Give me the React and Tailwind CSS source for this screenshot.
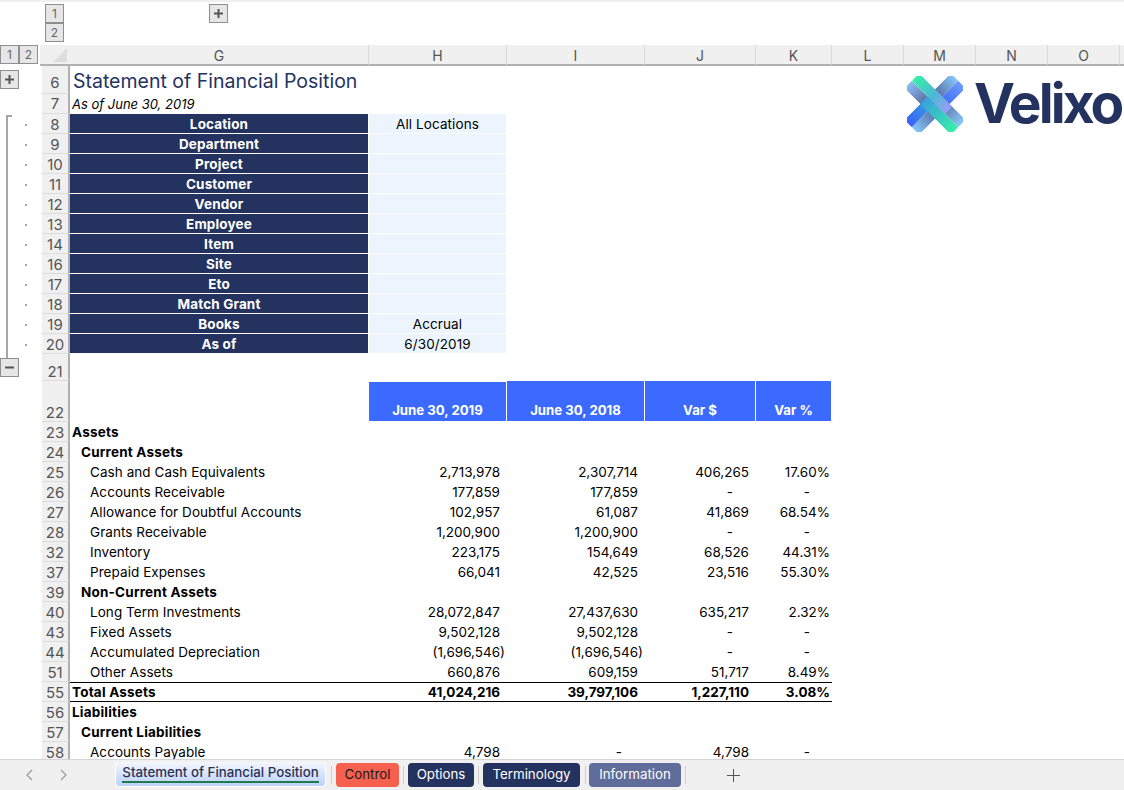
import React from "react";

const F = { fontFamily: '"Inter", "Liberation Sans", sans-serif' };

const cols = [
  ["G", 299],
  ["H", 138],
  ["I", 138],
  ["J", 111],
  ["K", 76],
  ["L", 72],
  ["M", 72],
  ["N", 72],
  ["O", 72],
];

function Grad({ id, dir, from, to, mid }) {
  const p = dir === "x" ? { x1: 0, y1: 0, x2: 1, y2: 0 } : { x1: 0, y1: 0, x2: 0, y2: 1 };
  return (
    <linearGradient id={id} {...p}>
      <stop offset="0" stopColor={from} />
      {mid && <stop offset="0.55" stopColor={mid} />}
      <stop offset="1" stopColor={to} />
    </linearGradient>
  );
}

function Logo() {
  return (
    <div className="absolute left-[907px] top-[76px] flex items-start">
      <svg width="56" height="56" viewBox="-28 -28 56 56" className="shrink-0">
        <defs>
          <clipPath id="xshape">
            <rect x="-33" y="-10.5" width="66" height="21" rx="4" />
            <rect x="-10.5" y="-33" width="21" height="66" rx="4" />
          </clipPath>
          <Grad id="greenBand" dir="x" from="#35f2a6" mid="#4cb8d4" to="#9a9cf8" />
          <Grad id="tlDark" dir="x" from="#8cbef7" to="#5f74a6" />
          <Grad id="brDark" dir="x" from="#5f7fb2" to="#8ccaf9" />
          <Grad id="brGreen" dir="x" from="#3a9fdc" to="#38f0a6" />
          <Grad id="trLight" dir="y" from="#85c8fa" to="#5f76ac" />
          <Grad id="trBlue" dir="y" from="#6f9bfb" to="#3560fb" />
          <Grad id="blBlue" dir="y" from="#3aa6da" to="#3a62fb" />
          <Grad id="blLight" dir="y" from="#5f7fb2" to="#86c6f9" />
        </defs>
        <g transform="rotate(45)" clipPath="url(#xshape)">
          <rect x="-33" y="0" width="23" height="10.5" fill="url(#tlDark)" />
          <rect x="10" y="-10.5" width="23" height="10.5" fill="url(#brDark)" />
          <rect x="-10.5" y="-33" width="10.5" height="23" fill="url(#trLight)" />
          <rect x="0" y="-33" width="10.5" height="33" fill="url(#trBlue)" />
          <rect x="0" y="10" width="10.5" height="23" fill="url(#blLight)" />
          <rect x="-10.5" y="-1" width="10.5" height="34" fill="url(#blBlue)" />
          <rect x="-10.5" y="0" width="43.5" height="10.5" fill="url(#brGreen)" />
          <rect x="-33" y="-10.5" width="47" height="10.5" rx="2" fill="url(#greenBand)" />
        </g>
      </svg>
      <span className="ml-[11px] text-[55px] leading-none font-bold tracking-[-2.9px] text-[#24325f]" style={F}>Velixo</span>
    </div>
  );
}

const navy = [
  [8, "Location", "All Locations"],
  [9, "Department", ""],
  [10, "Project", ""],
  [11, "Customer", ""],
  [12, "Vendor", ""],
  [13, "Employee", ""],
  [14, "Item", ""],
  [16, "Site", ""],
  [17, "Eto", ""],
  [18, "Match Grant", ""],
  [19, "Books", "Accrual"],
  [20, "As of", "6/30/2019"],
];

const data = [
  [23, "Assets", 0, 1],
  [24, "Current Assets", 1, 1],
  [25, "Cash and Cash Equivalents", 2, 0, "2,713,978", "2,307,714", "406,265", "17.60%"],
  [26, "Accounts Receivable", 2, 0, "177,859", "177,859", "-", "-"],
  [27, "Allowance for Doubtful Accounts", 2, 0, "102,957", "61,087", "41,869", "68.54%"],
  [28, "Grants Receivable", 2, 0, "1,200,900", "1,200,900", "-", "-"],
  [32, "Inventory", 2, 0, "223,175", "154,649", "68,526", "44.31%"],
  [37, "Prepaid Expenses", 2, 0, "66,041", "42,525", "23,516", "55.30%"],
  [39, "Non-Current Assets", 1, 1],
  [40, "Long Term Investments", 2, 0, "28,072,847", "27,437,630", "635,217", "2.32%"],
  [43, "Fixed Assets", 2, 0, "9,502,128", "9,502,128", "-", "-"],
  [44, "Accumulated Depreciation", 2, 0, "(1,696,546)", "(1,696,546)", "-", "-"],
  [51, "Other Assets", 2, 0, "660,876", "609,159", "51,717", "8.49%"],
  [55, "Total Assets", 0, 1, "41,024,216", "39,797,106", "1,227,110", "3.08%"],
  [56, "Liabilities", 0, 1],
  [57, "Current Liabilities", 1, 1],
  [58, "Accounts Payable", 2, 0, "4,798", "-", "4,798", "-"],
];

function OutlineBtn({ children, className = "" }) {
  return (
    <div className={"flex items-center justify-center border border-[#8f8f8f] bg-[#e6e6e6] text-[12px] leading-none text-[#666666] " + className}>
      {children}
    </div>
  );
}

function Plus() {
  return (
    <svg width="9" height="9" viewBox="0 0 9 9" stroke="#555555" strokeWidth="2"><path d="M4.5 0v9M0 4.5h9" /></svg>
  );
}

function Outline({ line, dot, children, first, last }) {
  return (
    <div className="relative w-[42px] shrink-0 self-stretch">
      {line && <div className={"absolute left-[6px] w-[2px] bg-[#a6a6a6] " + (first ? "top-[1px] " : "top-0 ") + (last ? "bottom-[-4px]" : "bottom-0")} />}
      {dot && <div className="absolute left-[25px] top-[10px] h-[2px] w-[2px] bg-[#a6a6a6]" />}
      {children}
    </div>
  );
}

function RowHead({ n, className = "" }) {
  return (
    <div className={"flex w-[28px] shrink-0 items-end justify-center self-stretch border-r-2 border-b border-r-[#b0b0b0] border-b-[#dcdcdc] bg-[#f0f0f0] text-[15px] leading-[17px] text-[#555555] " + className}>
      {n}
    </div>
  );
}

export default function App() {
  return (
    <div className="relative h-[790px] w-[1124px] overflow-hidden bg-white text-[13.5px] text-black" style={F}>
      <div className="h-[2px] bg-[#f0f0f0]" />

      {/* column outline */}
      <div className="flex h-[43px]">
        <div className="w-[45px] shrink-0" />
        <div className="flex flex-col">
          <OutlineBtn className="mt-[2px] h-[19px] w-[19px]">1</OutlineBtn>
          <OutlineBtn className="h-[19px] w-[19px]">2</OutlineBtn>
        </div>
        <OutlineBtn className="ml-[145px] mt-[2px] h-[19px] w-[19px]"><Plus /></OutlineBtn>
      </div>

      {/* column headers */}
      <div className="flex h-[21px]">
        <div className="flex w-[40px] shrink-0 items-start">
          <OutlineBtn className="h-[19px] w-[19px]">1</OutlineBtn>
          <OutlineBtn className="h-[19px] w-[19px]">2</OutlineBtn>
        </div>
        <div className="relative w-[30px] shrink-0 border-b-2 border-[#b0b0b0] bg-[#f0f0f0]">
          <svg width="14" height="14" className="absolute right-[3px] bottom-[2px]"><path d="M14 0V14H0Z" fill="#dddddd" /></svg>
        </div>
        {cols.map(([c, w]) => (
          <div key={c} style={{ width: w }} className="flex shrink-0 items-center justify-center border-r border-b-2 border-r-[#d8d8d8] border-b-[#b0b0b0] bg-[#f0f0f0] pt-px text-[14px] text-[#555555]">
            {c}
          </div>
        ))}
        <div className="flex-1 border-b-2 border-[#b0b0b0] bg-[#f0f0f0]" />
      </div>

      {/* row 6 */}
      <div className="flex h-[28px]">
        <Outline>
          <OutlineBtn className="absolute left-0 top-[4px] h-[19px] w-[19px]"><Plus /></OutlineBtn>
        </Outline>
        <RowHead n={6} className="pb-[2px]" />
        <div className="pl-[3px] text-[19.5px] leading-[30px] text-[#24325f]">Statement of Financial Position</div>
      </div>

      {/* row 7 */}
      <div className="flex h-[20px]">
        <Outline />
        <RowHead n={7} className="pb-px" />
        <div className="pl-[2px] text-[13px] leading-[20px] italic">As of June 30, 2019</div>
      </div>

      {navy.map(([n, label, val], i) => (
        <div key={n} className="flex h-[20px]">
          <Outline line dot first={i === 0} last={i === navy.length - 1}>
            {i === 0 && <div className="absolute left-[6px] top-[1px] h-[2px] w-[6px] bg-[#a6a6a6]" />}
          </Outline>
          <RowHead n={n} />
          <div className="flex w-[298px] shrink-0 items-center justify-center border-b border-white bg-[#24325f] pt-px font-bold tracking-[0.15px] text-white">{label}</div>
          <div className="w-[1px] shrink-0" />
          <div className="flex w-[137px] shrink-0 items-center justify-center border-b border-white bg-[#ecf5fe] pt-px tracking-[0.1px]">{val}</div>
        </div>
      ))}

      {/* row 21 */}
      <div className="flex h-[27px]">
        <Outline>
          <OutlineBtn className="absolute left-0 top-[4px] h-[19px] w-[19px]">
            <svg width="9" height="9" viewBox="0 0 9 9" stroke="#555555" strokeWidth="2"><path d="M0 4.5h9" /></svg>
          </OutlineBtn>
        </Outline>
        <RowHead n={21} />
      </div>

      {/* row 22 */}
      <div className="flex h-[41px]">
        <Outline />
        <RowHead n={22} />
        <div className="w-[299px] shrink-0" />
        {[["June 30, 2019", 137, "mt-px"], ["June 30, 2018", 137, ""], ["Var $", 110, ""], ["Var %", 75, ""]].map(([t, w, m]) => (
          <div key={t} style={{ width: w }} className={"mr-px mb-px flex shrink-0 items-end justify-center bg-[#3c6aff] text-[13.2px] font-bold text-white " + m}>
            {t}
          </div>
        ))}
      </div>

      {data.map(([n, label, ind, bold, a, b, c, d]) => {
        const total = n === 55;
        return (
          <div key={n} className="flex h-[20px]">
            <Outline />
            <RowHead n={n} />
            <div className={"flex shrink-0 " + (total ? "border-y border-black " : "") + (bold ? "font-bold" : "")}>
              <div className={"flex w-[299px] shrink-0 items-center " + (bold ? "tracking-[0.2px] " : "tracking-[0.06px] ") + (ind === 0 ? "pl-[2px]" : ind === 1 ? "pl-[11px]" : "pl-[20px]")}>{label}</div>
              {[a, b, c, d].map((v, i) => (
                <div key={i} style={{ width: [138, 138, 111, 76][i] }} className={"flex shrink-0 items-center justify-end " + (i === 3 ? "pr-[2px]" : v && v.startsWith("(") ? "pr-[2px]" : "pr-[7px]")}>
                  {v === "-" ? <span className={i === 3 ? "pr-[20px]" : "pr-[16px]"}>-</span> : v}
                </div>
              ))}
            </div>
          </div>
        );
      })}

      <Logo />

      {/* sheet tabs */}
      <div className="absolute bottom-0 left-0 right-0 flex h-[31px] items-center border-t border-[#d4d4d4] bg-[#f0f0f0] text-[13.3px]">
        <svg width="12" height="12" viewBox="0 0 12 12" className="ml-[24px]" fill="none" stroke="#9a9a9a" strokeWidth="1.2"><path d="M8 1 3 6l5 5" /></svg>
        <svg width="12" height="12" viewBox="0 0 12 12" className="ml-[21px]" fill="none" stroke="#9a9a9a" strokeWidth="1.2"><path d="m4 1 5 5-5 5" /></svg>
        <div className="mt-[2px] ml-[46px] flex h-[25px] w-[211px] flex-col items-center self-start rounded-b-[5px] border border-t-0 border-white bg-gradient-to-b from-[#f4f7ff] to-[#bcd0fb] pt-px text-[#2b3350]">
          <span className="border-b-2 border-[#1f7a4d] leading-[18px] font-medium">Statement of Financial Position</span>
        </div>
        <div className="ml-[5px] h-[18px] w-px bg-[#cfcfcf]" />
        <div className="ml-[4px] flex h-[24px] w-[63px] items-center justify-center rounded-[4px] bg-[#f6604f] text-[#1a1a1a]">Control</div>
        <div className="ml-[4px] h-[18px] w-px bg-[#cfcfcf]" />
        <div className="ml-[4px] flex h-[24px] w-[66px] items-center justify-center rounded-[4px] bg-[#24325f] text-white">Options</div>
        <div className="ml-[4px] h-[18px] w-px bg-[#cfcfcf]" />
        <div className="ml-[4px] flex h-[24px] w-[97px] items-center justify-center rounded-[4px] bg-[#24325f] text-white">Terminology</div>
        <div className="ml-[5px] h-[18px] w-px bg-[#cfcfcf]" />
        <div className="ml-[3px] flex h-[24px] w-[92px] items-center justify-center rounded-[4px] bg-[#606c99] text-white">Information</div>
        <div className="ml-[4px] h-[18px] w-px bg-[#cfcfcf]" />
        <svg width="13" height="13" viewBox="0 0 13 13" className="ml-[41px]" stroke="#555555" strokeWidth="1"><path d="M6.5 0v13M0 6.5h13" /></svg>
      </div>
    </div>
  );
}
